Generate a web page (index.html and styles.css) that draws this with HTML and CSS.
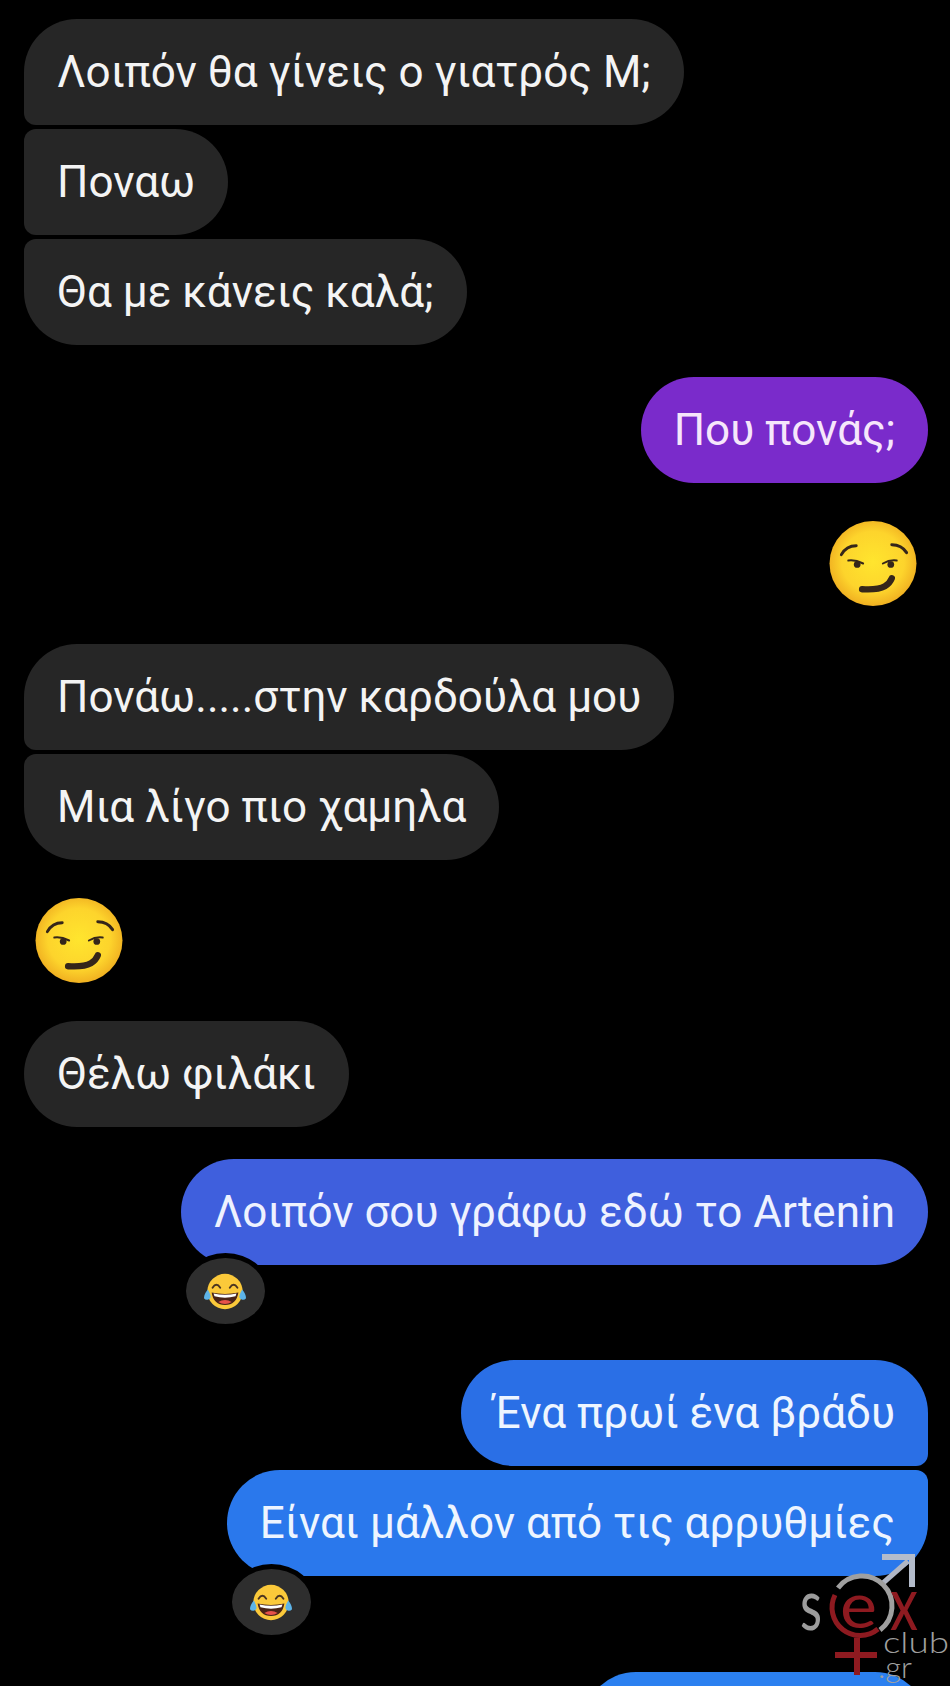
FILE: index.html
```html
<!DOCTYPE html>
<html lang="el">
<head>
    <meta charset="UTF-8">
    <meta name="viewport" content="width=device-width, initial-scale=1.0">
    <title>Chat</title>
    <link rel="stylesheet" href="styles.css">
</head>
<body>

<!-- emoji shared by the messages -->
<svg class="defs" width="0" height="0">
    <defs>
        <radialGradient id="faceGold" cx="50%" cy="48%" r="55%">
            <stop offset="0%" stop-color="#ffe52e"/>
            <stop offset="65%" stop-color="#fdd42c"/>
            <stop offset="100%" stop-color="#eeaa1f"/>
        </radialGradient>
        <symbol id="smirk" viewBox="0 0 88 86">
            <ellipse cx="44" cy="43" rx="44" ry="43" fill="url(#faceGold)"/>
            <path d="M12 34 Q17 25 27 25" fill="none" stroke="#35261a" stroke-width="3" stroke-linecap="round"/>
            <path d="M63 24 Q73 24 78 32" fill="none" stroke="#35261a" stroke-width="3" stroke-linecap="round"/>
            <path d="M19 40 Q26 39 34 43" fill="none" stroke="#35261a" stroke-width="2" stroke-linecap="round"/>
            <path d="M54 43 Q61 39 68 40" fill="none" stroke="#35261a" stroke-width="2" stroke-linecap="round"/>
            <circle cx="28" cy="44" r="3.4" fill="#35261a"/>
            <circle cx="62" cy="44" r="3.4" fill="#35261a"/>
            <path d="M33 69 Q49 70 56 66 Q61 63 63 58" fill="none" stroke="#35261a" stroke-width="6.5" stroke-linecap="round"/>
        </symbol>
        <symbol id="joy" viewBox="0 0 46 38">
            <circle cx="23" cy="19" r="18.5" fill="#fbc93a"/>
            <path d="M10 15 Q14 9 18 15" fill="none" stroke="#4a3420" stroke-width="2" stroke-linecap="round"/>
            <path d="M28 15 Q32 9 36 15" fill="none" stroke="#4a3420" stroke-width="2" stroke-linecap="round"/>
            <path d="M9 20 Q23 23 37 20 Q35 33 23 33 Q11 33 9 20Z" fill="#4a2417"/>
            <path d="M11 21 Q23 24 35 21 L34 24 Q23 27 12 24Z" fill="#fff"/>
            <path d="M16 30 Q23 26 30 30 Q23 34 16 30Z" fill="#e8524a"/>
            <path d="M5 17 Q8 22 8 25 A4 4 0 0 1 1 26 Q1 22 5 17Z" fill="#5db4e8"/>
            <path d="M41 17 Q38 22 38 25 A4 4 0 0 0 45 26 Q45 22 41 17Z" fill="#5db4e8"/>
        </symbol>
    </defs>
</svg>

<div class="chat">

    <div class="group">
        <div class="bubble grey first-left">Λοιπόν θα γίνεις ο γιατρός Μ;</div>
        <div class="bubble grey mid-left">Ποναω</div>
        <div class="bubble grey last-left">Θα με κάνεις καλά;</div>
    </div>

    <div class="group mine gap-small">
        <div class="bubble purple">Που πονάς;</div>
    </div>

    <div class="group mine gap-big">
        <svg class="emoji emoji-right"><use href="#smirk"/></svg>
    </div>

    <div class="group gap-big">
        <div class="bubble grey first-left">Πονάω.....στην καρδούλα μου</div>
        <div class="bubble grey last-left">Μια λίγο πιο χαμηλα</div>
    </div>

    <div class="group gap-big">
        <svg class="emoji emoji-left"><use href="#smirk"/></svg>
    </div>

    <div class="group gap-big">
        <div class="bubble grey">Θέλω φιλάκι</div>
    </div>

    <div class="group mine gap-small">
        <div class="bubble blue-1">
            Λοιπόν σου γράφω εδώ το Artenin
            <span class="reaction"><svg class="joy"><use href="#joy"/></svg></span>
        </div>
    </div>

    <div class="group mine gap-reaction">
        <div class="bubble blue-2 first-right">Ένα πρωί ένα βράδυ</div>
        <div class="bubble blue-3 last-right">
            Είναι μάλλον από τις αρρυθμίες
            <span class="reaction"><svg class="joy"><use href="#joy"/></svg></span>
        </div>
    </div>

    <!-- cut off by the bottom of the screen -->
    <div class="group mine gap-last">
        <div class="bubble blue-4"></div>
    </div>

</div>

<!-- watermark -->
<svg class="watermark" width="160" height="141" viewBox="0 0 160 141">
    <path d="M93 38 L118 16" stroke="#b0b6c4" stroke-width="5" fill="none"/>
    <path d="M92 12 H122 V42" stroke="#b4bccb" stroke-width="6" fill="none"/>
    <path d="M48 43 A30 30 0 1 1 90 85" stroke="#a0a0a0" stroke-width="5" fill="none"/>
    <path d="M45 50 A28 28 0 0 0 88 84" stroke="#8e1a20" stroke-width="5" fill="none"/>
    <path d="M67 93 V130 M45 110 H87" stroke="#8e1a20" stroke-width="6" fill="none"/>
    <text class="wm-s" x="10" y="85" textLength="22" lengthAdjust="spacingAndGlyphs">s</text>
    <text class="wm-e" x="50" y="83" textLength="37" lengthAdjust="spacingAndGlyphs">e</text>
    <text class="wm-x" x="100" y="85" textLength="28" lengthAdjust="spacingAndGlyphs">x</text>
    <text class="wm-club" x="93" y="108" textLength="66" lengthAdjust="spacingAndGlyphs">club</text>
    <text class="wm-gr" x="88" y="133" textLength="34" lengthAdjust="spacingAndGlyphs">.gr</text>
</svg>

</body>
</html>
```

FILE: styles.css
```css
html, body {
    margin: 0;
    padding: 0;
    height: 1686px;
    overflow: hidden;
    background-color: #000;
}

body {
    position: relative;
    font-family: Roboto, "Noto Sans", sans-serif;
    color: #f4f4f4;
}

.defs {
    position: absolute;
}

.chat {
    display: flex;
    flex-direction: column;
    height: 1686px;
    box-sizing: border-box;
    overflow: hidden;
    padding: 19px 22px 0 24px;
}

.group {
    display: flex;
    flex-direction: column;
    align-items: flex-start;
    flex-shrink: 0;
    gap: 4px;
}

.mine {
    align-items: flex-end;
}

.gap-small {
    margin-top: 32px;
}

.gap-big {
    margin-top: 38px;
}

.gap-reaction {
    margin-top: 95px;
}

.gap-last {
    margin-top: 96px;
}

/* bubbles */
.bubble {
    position: relative;
    display: flex;
    align-items: center;
    height: 106px;
    padding: 0 33px;
    box-sizing: border-box;
    border-radius: 53px;
    font-size: 44px;
    white-space: nowrap;
}

.grey {
    background-color: #262626;
}

.purple {
    background-color: #7a2bcb;
    color: #f6e6fb;
}

.blue-1 {
    background-color: #3f5fdd;
    color: #eef2ff;
}

.blue-2 {
    background-color: #2a6fe6;
    color: #eef5ff;
}

.blue-3 {
    background-color: #2a78ec;
    color: #eef5ff;
}

.blue-4 {
    background-color: #2b80f0;
    width: 345px;
}

.first-left {
    border-bottom-left-radius: 12px;
}

.mid-left {
    border-top-left-radius: 12px;
    border-bottom-left-radius: 12px;
}

.last-left {
    border-top-left-radius: 12px;
}

.first-right {
    border-bottom-right-radius: 12px;
}

.last-right {
    border-top-right-radius: 12px;
}

/* emoji */
.emoji {
    display: block;
    width: 88px;
    height: 85px;
}

.emoji-right {
    margin-right: 11px;
}

.emoji-left {
    margin-left: 11px;
}

.reaction {
    position: absolute;
    left: 0;
    top: 94px;
    display: flex;
    align-items: center;
    justify-content: center;
    width: 79px;
    height: 66px;
    border: 5px solid #000;
    border-radius: 50%;
    background-color: #2e2e2e;
}

.joy {
    width: 44px;
    height: 37px;
}

/* watermark */
.watermark {
    position: absolute;
    left: 790px;
    top: 1545px;
}

.watermark text {
    font-family: Lato, "Open Sans", sans-serif;
}

.wm-s {
    font-size: 72px;
    fill: #9c9c9c;
}

.wm-e {
    font-size: 62px;
    fill: #8e1a20;
}

.wm-x {
    font-size: 76px;
    fill: #8e1a20;
}

.wm-club {
    font-size: 30px;
    font-weight: 300;
    fill: #a0a0a0;
}

.wm-gr {
    font-size: 30px;
    font-weight: 300;
    fill: #a0a0a0;
}
```
